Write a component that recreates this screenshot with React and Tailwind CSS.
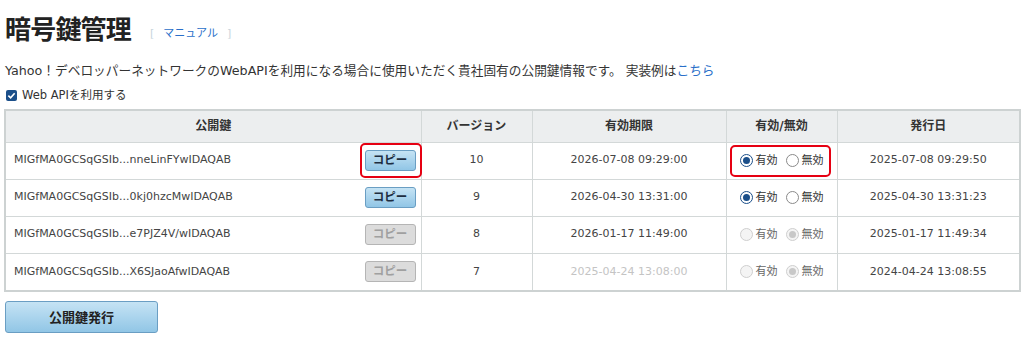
import React from "react";

const rows = [
  { key: "MIGfMA0GCSqGSIb...nneLinFYwIDAQAB", ver: "10", exp: "2026-07-08 09:29:00", expired: false, active: true, issued: "2025-07-08 09:29:50", hl: true },
  { key: "MIGfMA0GCSqGSIb...0kj0hzcMwIDAQAB", ver: "9", exp: "2026-04-30 13:31:00", expired: false, active: true, issued: "2025-04-30 13:31:23" },
  { key: "MIGfMA0GCSqGSIb...e7PJZ4V/wIDAQAB", ver: "8", exp: "2026-01-17 11:49:00", expired: false, active: false, issued: "2025-01-17 11:49:34" },
  { key: "MIGfMA0GCSqGSIb...X6SJaoAfwIDAQAB", ver: "7", exp: "2025-04-24 13:08:00", expired: true, active: false, issued: "2024-04-24 13:08:55" },
];

function Radio({ checked, disabled }) {
  if (disabled) {
    return (
      <span className="inline-flex w-[13px] h-[13px] rounded-full border border-[#cfcfcf] bg-[#f4f4f4] items-center justify-center">
        {checked && <span className="w-[7px] h-[7px] rounded-full bg-[#c8c8c8]" />}
      </span>
    );
  }
  return (
    <span className={"inline-flex w-[13px] h-[13px] rounded-full border items-center justify-center bg-white " + (checked ? "border-[#1b4f8a]" : "border-[#8a8a8a]")}>
      {checked && <span className="w-[7px] h-[7px] rounded-full bg-[#1b4f8a]" />}
    </span>
  );
}

export default function App() {
  const font = { fontFamily: '"DejaVu Sans", Verdana, "Noto Sans CJK JP", sans-serif' };
  return (
    <div className="bg-white w-[1024px] h-[350px] overflow-hidden text-[#333]" style={font}>
      <div className="pl-[5px] pt-[11px] flex items-end">
        <h1 className="text-[26px] leading-[34px] font-bold text-[#222] tracking-[-0.8px]" style={{ fontFamily: '"Noto Sans CJK JP", sans-serif' }}>暗号鍵管理</h1>
        <span className="ml-[19px] mb-[1px] text-[11px] leading-[20px]">
          <span className="text-[#c8d4dc]">[</span>
          <span className="text-[#2a6fc9] mx-[9px]">マニュアル</span>
          <span className="text-[#c8d4dc]">]</span>
        </span>
      </div>
      <p className="pl-[5px] mt-[17px] text-[12.7px] leading-[18px] text-[#333]">
        Yahoo！デベロッパーネットワークのWebAPIを利用になる場合に使用いただく貴社固有の公開鍵情報です。 実装例は<span className="text-[#2a6fc9]">こちら</span>
      </p>
      <label className="pl-[6px] mt-[7px] flex items-center gap-[5px] text-[11.5px] leading-[16px]">
        <span className="w-[11px] h-[11px] rounded-[2px] bg-[#1b4f8a] flex items-center justify-center">
          <svg width="9" height="9" viewBox="0 0 10 10"><path d="M1.5 5.2 L4 7.5 L8.5 2.5" stroke="white" strokeWidth="1.8" fill="none" /></svg>
        </span>
        Web APIを利用する
      </label>
      <div className="mt-[6px] ml-[4px] w-[1017px] border-2 border-[#cdd2d2]">
        <table className="w-full border-collapse text-[11px]">
          <colgroup>
            <col className="w-[415px]" />
            <col className="w-[111px]" />
            <col className="w-[194px]" />
            <col className="w-[111px]" />
            <col />
          </colgroup>
          <thead>
            <tr className="bg-[#eceeef] h-[31px]">
              {["公開鍵", "バージョン", "有効期限", "有効/無効", "発行日"].map((h, i) => (
                <th key={i} className={"font-bold text-[12px] text-[#333] text-center " + (i > 0 ? "border-l border-[#d3d8d8]" : "")}>{h}</th>
              ))}
            </tr>
          </thead>
          <tbody>
            {rows.map((r, i) => (
              <tr key={i} className="h-[37px] border-t border-[#d3d8d8]">
                <td className="pl-[8px] pr-[5px]">
                  <div className="flex items-center justify-between text-[#444]">
                    <span>{r.key}</span>
                    <span className="relative">
                      {r.hl && <span className="absolute left-[-5px] top-[-7px] w-[62px] h-[35px] border-2 border-[#e60012] rounded-[5px]" />}
                      {r.expired || !r.active ? (
                        <span className="flex items-center justify-center w-[51px] h-[21px] rounded-[3px] border border-[#b5b5b5] bg-[#dcdcdc] text-[#a0a0a0] font-bold text-[11.5px]">コピー</span>
                      ) : (
                        <span className="flex items-center justify-center w-[51px] h-[21px] rounded-[3px] border border-[#6a9ec3] bg-gradient-to-b from-[#c5e3f4] to-[#91c6e6] text-[#1d2d40] font-bold text-[11.5px]">コピー</span>
                      )}
                    </span>
                  </div>
                </td>
                <td className="text-center text-[#444] border-l border-[#d3d8d8]">{r.ver}</td>
                <td className={"text-center border-l border-[#d3d8d8] " + (r.expired ? "text-[#c4c4c4]" : "text-[#444]")}>{r.exp}</td>
                <td className="border-l border-[#d3d8d8]">
                  <div className="flex justify-center">
                    <span className="relative flex items-center gap-[3px] text-[11px] leading-[14px]">
                      {r.hl && <span className="absolute left-[-10px] top-[-9px] w-[101px] h-[32px] border-2 border-[#e60012] rounded-[5px]" />}
                      <Radio checked={r.active} disabled={!r.active} />
                      <span className={r.active ? "text-[#333]" : "text-[#666]"}>有効</span>
                      <span className="ml-[2px]" />
                      <Radio checked={!r.active} disabled={!r.active} />
                      <span className={r.active ? "text-[#333]" : "text-[#666]"}>無効</span>
                    </span>
                  </div>
                </td>
                <td className="text-center text-[#444] border-l border-[#d3d8d8]">{r.issued}</td>
              </tr>
            ))}
          </tbody>
        </table>
      </div>
      <div className="mt-[9px] ml-[5px] w-[153px] h-[32px] rounded-[3px] border border-[#6a9ec3] bg-gradient-to-b from-[#c5e3f4] to-[#91c6e6] flex items-center justify-center font-bold text-[13px] text-[#222]" style={{ fontFamily: '"Noto Sans CJK JP", sans-serif' }}>
        公開鍵発行
      </div>
    </div>
  );
}
